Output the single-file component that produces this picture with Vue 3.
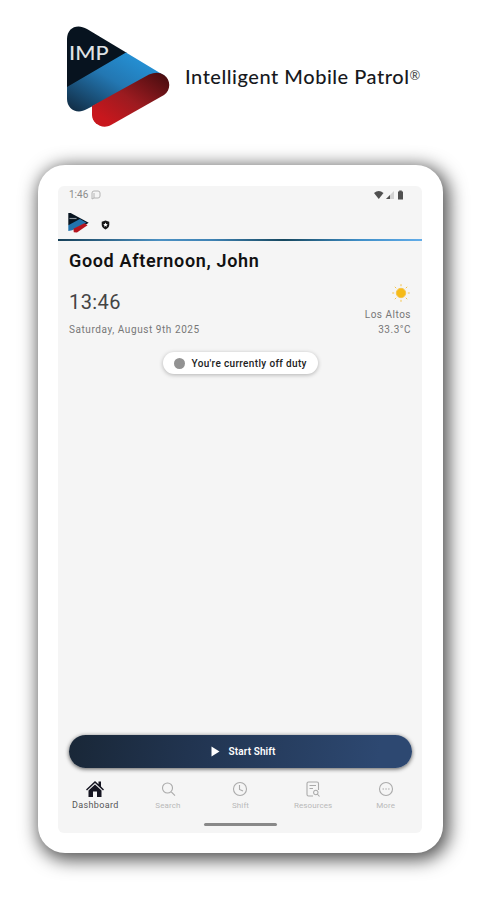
<template>
  <div class="promo">
    <header class="brand">
      <svg class="brand-logo" viewBox="0 0 104 102">
        <defs>
          <linearGradient id="brandBlue" x1="1" y1="0" x2="0" y2="1">
            <stop offset="0.1" stop-color="#2596dc" />
            <stop offset="0.5" stop-color="#2377b2" />
            <stop offset="1" stop-color="#10283e" />
          </linearGradient>
          <linearGradient id="brandRed" x1="1" y1="0" x2="0" y2="1">
            <stop offset="0.05" stop-color="#4a0d10" />
            <stop offset="0.5" stop-color="#9c1b20" />
            <stop offset="0.85" stop-color="#c8171d" />
          </linearGradient>
        </defs>
        <path fill="#07131f" d="M0 62V13C0 2 10-3 20 3L60 27Z" />
        <path fill="url(#brandBlue)" d="M0 61L59 26.500L98 50L85 50L20 83C10 89 0 83 0 73Z" />
        <path fill="url(#brandRed)" d="M25 80L82 48.500Q91 45 97 49C104 54 104 64 97 69L44 99C35 104 25 97 25 89Z" />
        <text class="logo-text" x="2" y="33.500" textLength="39.500" lengthAdjust="spacingAndGlyphs">IMP</text>
      </svg>
      <h1>Intelligent Mobile Patrol<sup>®</sup></h1>
    </header>

    <main class="phone">
      <div class="screen">
        <div class="status-bar">
          <span>1:46</span>
          <svg class="cast" viewBox="0 0 10 10"><path d="M1 9V3Q1 1 3 1H7Q9 1 9 3V6Q9 8 7 8H3L1 9M3 8V3" /></svg>
          <svg class="signals" viewBox="0 0 31 10">
            <path d="M0 3Q4.700-1 9.500 3L4.750 9Z" />
            <path class="faint" d="M12 9L20 1V9Z" />
            <path d="M12 9L16 5V9Z" />
            <path d="M24 1.500h1.200V.5h2.600v1H29V9.500h-5Z" />
          </svg>
        </div>

        <div class="app-bar">
          <svg class="small-logo" viewBox="0 0 104 102">
            <path fill="#07131f" d="M0 62V0H12L104 50L92 58Z" />
            <path fill="#2173ad" d="M0 62L59 30L92 50L20 88L0 92Z" />
            <path fill="#b4141e" d="M26 80L82 52L98 62L44 100L28 98Z" />
            <path stroke="#8b949b" stroke-width="6" d="M6 28H42" />
          </svg>
          <svg class="shield" viewBox="0 0 10 11">
            <path d="M5 .5L9.200 2V5.500Q9 8.500 5 10.500Q1 8.500.8 5.500V2Z" />
            <path class="star" d="M5 2.800L5.800 4.400L7.500 4.600L6.300 5.800L6.500 7.500L5 6.700L3.500 7.500L3.700 5.800L2.500 4.600L4.200 4.400Z" />
          </svg>
        </div>

        <section class="overview">
          <h2>Good Afternoon, John</h2>
          <div class="conditions">
            <div class="datetime">
              <div class="time">13:46</div>
              <div class="date">Saturday, August 9th 2025</div>
            </div>
            <div class="weather">
              <svg class="sun" viewBox="0 0 20 20">
                <circle cx="10" cy="10" r="4.700" />
                <path d="M10 1.200V3.200M10 16.800V18.800M1.200 10H3.200M16.800 10H18.800M3.800 3.800L5.200 5.200M14.800 14.800L16.200 16.200M3.800 16.200L5.200 14.800M14.800 5.200L16.200 3.800" />
              </svg>
              <div class="city">Los Altos</div>
              <div class="temp">33.3°C</div>
            </div>
          </div>
          <div class="duty"><i></i><span>You're currently off duty</span></div>
        </section>

        <button type="button" class="start-shift">
          <svg viewBox="0 0 9 11"><path d="M.5.500L8.500 5.500L.5 10.500Z" /></svg>
          <span>Start Shift</span>
        </button>

        <nav class="tabs">
          <button
            v-for="tab in tabs"
            :key="tab.name"
            type="button"
            :class="{ active: activeTab === tab.name }"
            @click="activeTab = tab.name"
          >
            <svg viewBox="0 0 18 18"><path :d="tab.icon" /></svg>
            <span>{{ tab.name }}</span>
          </button>
        </nav>
        <div class="home-indicator"></div>
      </div>
    </main>
  </div>
</template>

<script setup>
import { ref } from 'vue';

const activeTab = ref('Dashboard');

const tabs = [
  { name: 'Dashboard', icon: 'M9 4.500L15.500 10.500V17H11V11.500H7V17H2.500V10.500ZM0 9.500L9 1L12.500 4.300V1.500H15V6.500L18 9.500L17 10.500L9 3L1 10.500Z' },
  { name: 'Search', icon: 'M13.500 8A5 5 0 1 1 3.500 8A5 5 0 1 1 13.500 8M12 11.700L16 15.700' },
  { name: 'Shift', icon: 'M15.500 9A6.500 6.500 0 1 1 2.500 9A6.500 6.500 0 1 1 15.500 9M8.500 5V9.500L12 11' },
  { name: 'Resources', icon: 'M9 16H4.500Q3 16 3 14.500V3.500Q3 2 4.500 2H13Q14.500 2 14.500 3.500V10M5.500 5.500H12M5.500 8.500H9M14 12.500A2.200 2.200 0 1 1 9.600 12.500A2.200 2.200 0 1 1 14 12.500M13.300 14L15.500 16.500' },
  { name: 'More', icon: 'M15.500 9A6.500 6.500 0 1 1 2.500 9A6.500 6.500 0 1 1 15.500 9M5.500 9H7M8.300 9H9.800M11.100 9H12.600' }
];
</script>

<style>
body {
  background: #fff;
}
</style>

<style scoped>
.promo {
  box-sizing: border-box;
  width: 480px;
  height: 900px;
  padding: 26px 37px 47px 38px;
  overflow: hidden;
  display: flex;
  flex-direction: column;
  gap: 38px;
  background: #fff;
  font-family: Roboto, sans-serif;
}

.brand {
  height: 101px;
  display: flex;
  align-items: center;
  gap: 14px;
  padding-left: 29px;
}

.brand-logo {
  width: 104px;
  height: 102px;
  flex: none;
}

.logo-text {
  fill: #dfe2e4;
  font: 500 19px Lato, sans-serif;
}

.brand h1 {
  margin: -2px 0 0;
  font: 500 20px Lato, sans-serif;
  color: #17191d;
  letter-spacing: 0.53px;
  white-space: nowrap;
}

.brand sup {
  font-size: 13px;
  line-height: 0;
  vertical-align: 4px;
  color: #555;
}

.phone {
  box-sizing: border-box;
  height: 688px;
  padding: 21px 21px 20px 20px;
  border-radius: 27px;
  background: #fff;
  box-shadow: 3px 4px 18px 3px rgba(0, 0, 0, 0.68);
}

.screen {
  height: 647px;
  display: flex;
  flex-direction: column;
  border-radius: 6px;
  background: #f5f5f5;
}

.status-bar {
  height: 17px;
  display: flex;
  align-items: center;
  padding: 0 17px 0 11px;
  font-size: 10px;
  color: #8b8b8b;
}

.cast {
  width: 10px;
  height: 10px;
  margin-left: 3px;
  fill: none;
  stroke: #b4b4b4;
}

.signals {
  width: 31px;
  height: 10px;
  margin-left: auto;
  fill: #505050;
}

.faint {
  fill: #d2d2d2;
}

.app-bar {
  height: 36px;
  display: flex;
  align-items: center;
  gap: 12px;
  padding: 0 10px;
  border-bottom: 2px solid;
  border-image: linear-gradient(90deg, #163f57, #4b91c3 28%, #3f83b5 42%, #17485f 62%, #408fc8 83%, #62adea) 1;
}

.small-logo {
  width: 21px;
  height: 20px;
  margin-top: 4px;
}

.shield {
  width: 9px;
  height: 10px;
  margin-top: 7px;
  fill: #171717;
}

.star {
  fill: #fff;
}

.overview {
  flex: 1;
  display: flex;
  flex-direction: column;
  padding: 9px 11px 0;
}

.overview h2 {
  margin: 0;
  font-size: 18px;
  line-height: 22px;
  font-weight: 600;
  letter-spacing: 0.65px;
  color: #111;
}

.conditions {
  display: flex;
  justify-content: space-between;
  margin-top: 11px;
  color: #777;
  font-size: 10px;
}

.time {
  margin-top: 7px;
  font-size: 20px;
  line-height: 24px;
  letter-spacing: 0.4px;
  color: #444;
}

.date {
  margin-top: 9px;
  line-height: 14px;
  letter-spacing: 0.57px;
}

.weather {
  display: flex;
  flex-direction: column;
  align-items: flex-end;
  line-height: 15px;
  letter-spacing: 0.5px;
}

.sun {
  width: 20px;
  height: 20px;
  margin-bottom: 4px;
  fill: #f6bb17;
  stroke: #f4c34b;
}

.duty {
  align-self: center;
  box-sizing: border-box;
  width: 155px;
  height: 22px;
  display: flex;
  align-items: center;
  gap: 7px;
  margin-top: 15px;
  padding-left: 11px;
  border-radius: 12px;
  background: #fff;
  box-shadow: 0 1px 4px rgba(0, 0, 0, 0.28);
  font-size: 10px;
  font-weight: 500;
  letter-spacing: 0.35px;
  color: #222;
  white-space: nowrap;
}

.duty i {
  width: 11px;
  height: 11px;
  flex: none;
  border-radius: 50%;
  background: #929292;
}

.start-shift {
  height: 33px;
  margin: 0 10px 0 11px;
  padding: 0 0 0 5px;
  display: flex;
  align-items: center;
  justify-content: center;
  gap: 9px;
  border: 0;
  border-radius: 17px;
  background: linear-gradient(100deg, #192737, #213450 35%, #2d4871 90%);
  box-shadow: 0 1px 4px rgba(0, 0, 0, 0.65);
  color: #fff;
  font: 600 10px Roboto, sans-serif;
  letter-spacing: 0.1px;
}

.start-shift svg {
  width: 9px;
  height: 11px;
  fill: #fff;
}

.tabs {
  display: grid;
  grid-template-columns: repeat(5, 1fr);
  padding: 12px 0 0 1px;
}

.tabs button {
  min-width: 0;
  padding: 0;
  border: 0;
  background: none;
  display: flex;
  flex-direction: column;
  align-items: center;
  gap: 2px;
  color: #b9b9b9;
  font: 8px/11px Roboto, sans-serif;
  letter-spacing: 0.1px;
  cursor: pointer;
}

.tabs svg {
  width: 18px;
  height: 18px;
  fill: none;
  stroke: #aaa;
  stroke-width: 1.1;
}

.tabs .active {
  color: #555;
  font-size: 9px;
  letter-spacing: 0.35px;
}

.tabs .active svg {
  fill: #151521;
  stroke: none;
}

.home-indicator {
  width: 73px;
  height: 3px;
  margin: 12px auto 7px;
  border-radius: 2px;
  background: #898989;
}
</style>
